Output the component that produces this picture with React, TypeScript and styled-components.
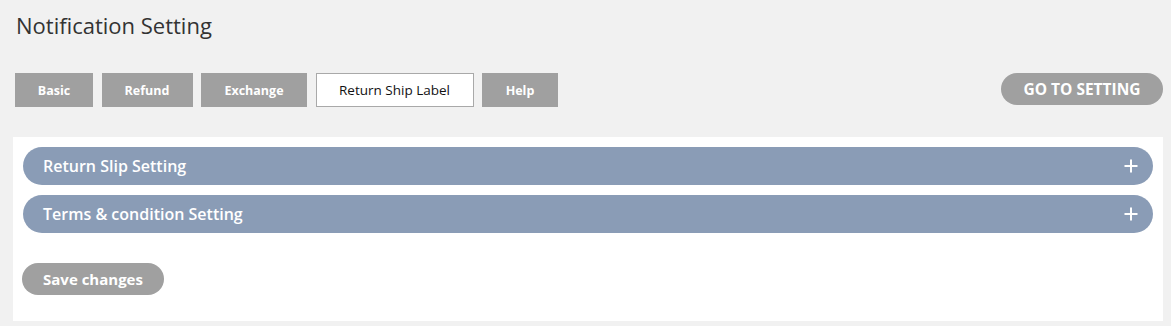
import React from "react";
import styled, { createGlobalStyle } from "styled-components";

const Global = createGlobalStyle`
  html, body { margin: 0; padding: 0; background: #f1f1f1; }
  body { font-family: "Open Sans", "Noto Sans", sans-serif; }
  * { box-sizing: border-box; }
`;

const Page = styled.div`
  padding: 0 8px 0 13px;
`;

const Title = styled.h1`
  margin: 0;
  padding: 10px 0 0 3px;
  height: 73px;
  font-size: 22px;
  line-height: 30px;
  font-weight: 400;
  color: #333;
`;

const Toolbar = styled.div`
  display: flex;
  align-items: flex-start;
  padding-left: 2px;
  height: 64px;
`;

const Tabs = styled.div`
  display: flex;
  gap: 8.5px;
`;

const Tab = styled.button<{ $active?: boolean; $w: number }>`
  width: ${(p) => p.$w}px;
  height: 34px;
  border: 1px solid ${(p) => (p.$active ? "#a9a9a9" : "#a0a0a0")};
  background: ${(p) => (p.$active ? "#fff" : "#a0a0a0")};
  color: ${(p) => (p.$active ? "#111" : "#fff")};
  font-family: inherit;
  font-size: ${(p) => (p.$active ? "13.5px" : "12.5px")};
  font-weight: ${(p) => (p.$active ? 400 : 700)};
  padding: 0;
  cursor: pointer;
`;

const GoButton = styled.button`
  margin-left: auto;
  height: 32px;
  width: 162px;
  border: none;
  border-radius: 16px;
  background: #a0a0a0;
  color: #fff;
  font-family: inherit;
  font-size: 15.5px;
  font-weight: 700;
  padding: 0;
  cursor: pointer;
`;

const Panel = styled.div`
  background: #fff;
  padding: 10px 10px 26px 10px;
  display: flex;
  flex-direction: column;
  gap: 10px;
`;

const Bar = styled.div`
  display: flex;
  align-items: center;
  justify-content: space-between;
  height: 38px;
  border-radius: 19px;
  background: #8a9cb6;
  color: #fff;
  padding: 0 15px 0 20px;
  font-size: 16px;
  font-weight: 600;
  cursor: pointer;
`;

const Save = styled.button`
  align-self: flex-start;
  margin-top: 20px;
  height: 32px;
  width: 142px;
  margin-left: -1px;
  border: none;
  border-radius: 16px;
  background: #a0a0a0;
  color: #fff;
  font-family: inherit;
  font-size: 15px;
  font-weight: 700;
  padding: 0;
  cursor: pointer;
`;

const Plus = () => (
  <svg width="14" height="14" viewBox="0 0 14 14">
    <path d="M7 0.5V13.5M0.5 7H13.5" stroke="#fff" strokeWidth="2" />
  </svg>
);

const tabs: { label: string; w: number; active?: boolean }[] = [
  { label: "Basic", w: 78 },
  { label: "Refund", w: 91 },
  { label: "Exchange", w: 106 },
  { label: "Return Ship Label", w: 158, active: true },
  { label: "Help", w: 76 },
];

export default function App() {
  return (
    <Page>
      <Global />
      <Title>Notification Setting</Title>
      <Toolbar>
        <Tabs>
          {tabs.map((t) => (
            <Tab key={t.label} $w={t.w} $active={t.active}>
              {t.label}
            </Tab>
          ))}
        </Tabs>
        <GoButton>GO TO SETTING</GoButton>
      </Toolbar>
      <Panel>
        <Bar>
          Return Slip Setting
          <Plus />
        </Bar>
        <Bar>
          Terms &amp; condition Setting
          <Plus />
        </Bar>
        <Save>Save changes</Save>
      </Panel>
    </Page>
  );
}
